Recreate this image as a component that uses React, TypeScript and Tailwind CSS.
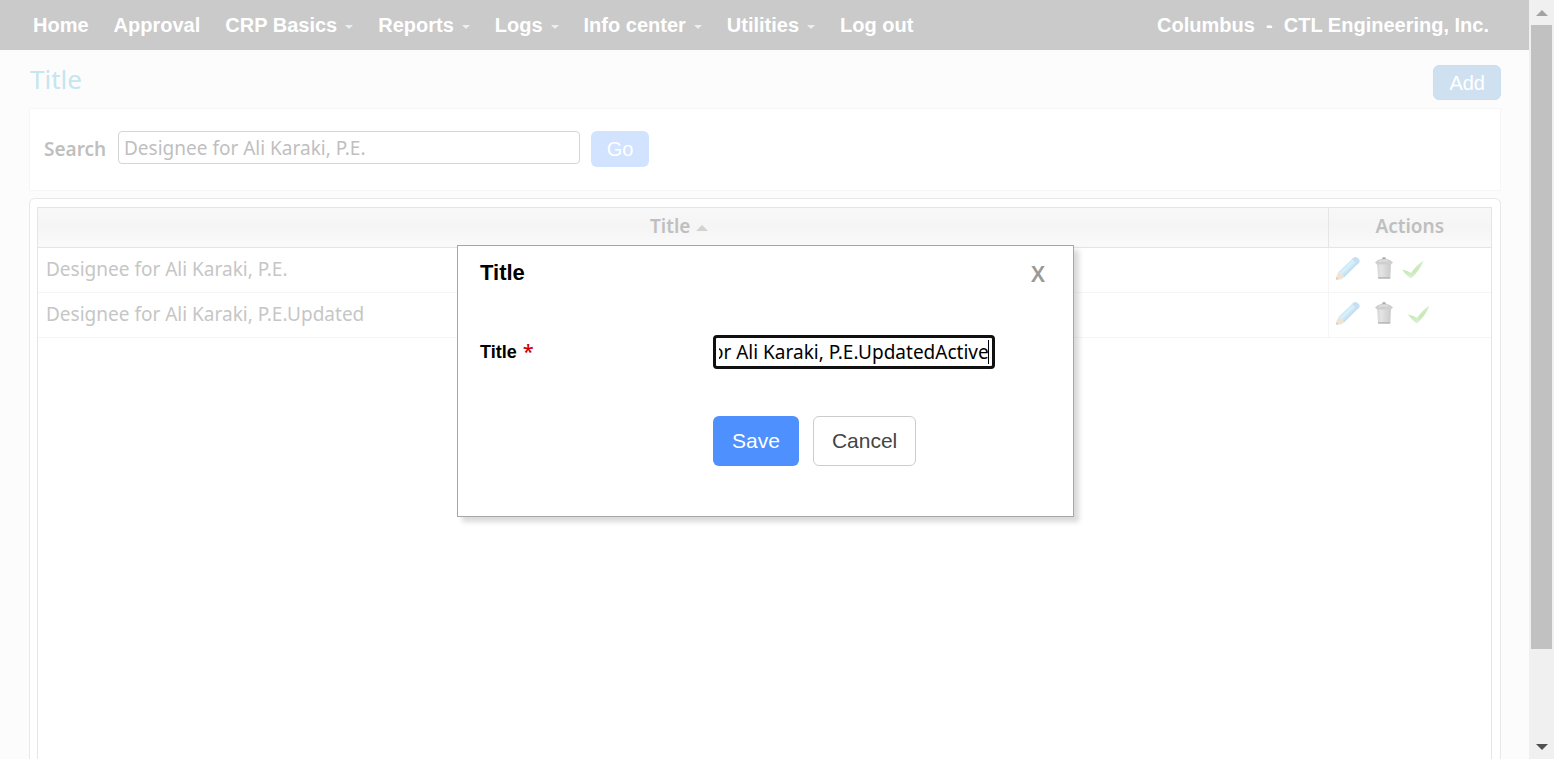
import { useEffect, useRef } from "react";

const navItems = [
  { label: "Home" },
  { label: "Approval" },
  { label: "CRP Basics", menu: true },
  { label: "Reports", menu: true },
  { label: "Logs", menu: true },
  { label: "Info center", menu: true },
  { label: "Utilities", menu: true },
  { label: "Log out" },
];

const rows = [
  { title: "Designee for Ali Karaki, P.E.", checkGap: "ml-2" },
  { title: "Designee for Ali Karaki, P.E.Updated", checkGap: "ml-3.5" },
];

function Pencil() {
  return (
    <svg width="24" height="24" viewBox="0 0 24 24" aria-hidden="true">
      <defs>
        <linearGradient id="pencilBody" gradientUnits="userSpaceOnUse" x1="8" y1="8" x2="15" y2="15">
          <stop offset="0.1" stopColor="#c3e3f4" />
          <stop offset="0.45" stopColor="#daf1fc" />
          <stop offset="0.95" stopColor="#bddcf0" />
        </linearGradient>
      </defs>
      <path d="M2.500 16 16.500 2.500l5.500 5L8 21.500Z" fill="url(#pencilBody)" />
      <path d="M16 3q2-2.500 4.500-1.800 3 1 3.300 3.800 0 1.500-2.300 3.500Z" fill="#c6e0f1" />
      <path d="M2.500 16 .2 21v2.500H5l3-2Q7.500 19 5.300 18.800 5 16.500 2.500 16Z" fill="#efe4d4" />
      <path d="M.2 21 2.500 23.500H.2Z" fill="#cfc8c0" />
    </svg>
  );
}

function Trash() {
  return (
    <svg width="20" height="24" viewBox="0 0 20 24" aria-hidden="true">
      <defs>
        <linearGradient id="canBody" x1="0" y1="0" x2="1" y2="0">
          <stop offset="0" stopColor="#d6d6d6" />
          <stop offset="0.3" stopColor="#e4e4e4" />
          <stop offset="1" stopColor="#cbcbcb" />
        </linearGradient>
      </defs>
      <path d="M3 7h14l-.6 14.500q0 1-1 1H5q-1 0-1-1Z" fill="url(#canBody)" />
      <path d="M3.800 21h12.600v.8q0 1-1 1H5q-1 0-1-1Z" fill="#bcbcbc" />
      <path d="M1 6.500Q3 3.500 7 3h6q4 .5 6 3.500L17 8.500H3Z" fill="#cfcfcf" />
      <path d="M5 5.500Q9 4 14 5" stroke="#e2e2e2" strokeWidth="1.200" fill="none" />
      <path d="M8 3Q8 1 10 1t2 2Z" fill="#b0b0b0" />
    </svg>
  );
}

function Check() {
  return (
    <svg width="22" height="24" viewBox="0 0 22 24" aria-hidden="true">
      <defs>
        <linearGradient id="checkFill" x1="0" y1="0" x2="0" y2="1">
          <stop offset="0" stopColor="#d5eec9" />
          <stop offset="0.6" stopColor="#c8e9b8" />
          <stop offset="1" stopColor="#dff2d6" />
        </linearGradient>
      </defs>
      <path d="M0 13.500Q5 14 9 17 14 9.500 21.500 4.500q-4 10.500-12.500 18Q4.500 20 0 13.500Z" fill="url(#checkFill)" />
    </svg>
  );
}

function EditDialog() {
  const field = useRef<HTMLInputElement>(null);
  useEffect(() => {
    const el = field.current;
    if (!el) return;
    el.focus();
    el.setSelectionRange(el.value.length, el.value.length);
    el.scrollLeft = el.scrollWidth;
  }, []);
  return (
    <div className="absolute inset-0 flex items-start justify-center pt-[245px] pl-0.5">
      <div
        role="dialog"
        aria-labelledby="dialog-title"
        className="w-[617px] border border-[#a6a6a6] bg-white px-[22px] pt-3 pb-[50px] shadow-[5px_5px_5px_rgba(0,0,0,0.15)]"
      >
        <div className="flex items-center justify-between pr-1.5">
          <h2 id="dialog-title" className="text-[22px] leading-[30px] font-bold text-black">Title</h2>
          <button type="button" aria-label="Close" className="font-['Noto_Sans',sans-serif] text-[22px] leading-[30px] font-semibold text-[#999]">X</button>
        </div>
        <form className="mt-[47px] grid grid-cols-[233px_1fr] items-center" onSubmit={(e) => e.preventDefault()}>
          <label htmlFor="title-field" className="flex items-center gap-1.5 text-[18px] leading-6 font-bold text-black">
            Title <span className="font-['Noto_Sans',sans-serif] text-[20px] leading-6 font-medium text-[#cc0000]">*</span>
          </label>
          <div className="relative w-[282px]">
            <input
              id="title-field"
              ref={field}
              defaultValue="Designee for Ali Karaki, P.E.UpdatedActive"
              className="block h-[34px] w-full rounded border-[3px] border-[#101010] px-[3px] font-['Noto_Sans',sans-serif] text-[19px] text-black caret-transparent outline-none"
            />
            <span className="absolute top-[5px] right-1.5 h-6 w-px bg-black" aria-hidden="true" />
          </div>
          <div className="col-start-2 mt-[47px] flex gap-3.5">
            <button type="submit" className="h-[50px] rounded-md bg-[#4d90fe] px-[19px] text-[21px] text-white">Save</button>
            <button type="button" className="h-[50px] rounded-md border border-[#ccc] bg-white px-[18px] text-[21px] text-[#444]">Cancel</button>
          </div>
        </form>
      </div>
    </div>
  );
}

export default function App() {
  return (
    <div className="flex h-screen overflow-hidden bg-[#fcfcfc] font-['Liberation_Sans',Arial,sans-serif]">
      <div className="relative flex min-w-0 flex-1 flex-col">
        <header className="flex h-[50px] shrink-0 items-center justify-between bg-[#cacaca] pr-10 pl-[33px] text-[20px] font-bold whitespace-nowrap text-white">
          <nav className="flex gap-[25px]">
            {navItems.map((item) => (
              <a key={item.label} href="#" className="flex items-center gap-2">
                {item.label}
                {item.menu && (
                  <svg width="8" height="4" viewBox="0 0 8 4" className="mt-1" aria-hidden="true">
                    <path d="M0 0h8L4 4Z" fill="#eeeeee" />
                  </svg>
                )}
              </a>
            ))}
          </nav>
          <p className="whitespace-pre">Columbus{"  -  "}CTL Engineering, Inc.</p>
        </header>
        <main className="flex min-h-0 flex-1 flex-col pr-7 pl-[29px] font-['Noto_Sans',sans-serif]">
          <div className="flex h-[58px] shrink-0 items-start justify-between pt-[15px] pl-px">
            <h1 className="text-[26px] leading-7 text-[#c5e5f1]">Title</h1>
            <button type="button" className="h-[35px] rounded-md border border-[#c8dff0] bg-[#cfe1f1] px-[15px] font-['Liberation_Sans',sans-serif] text-[20px] text-white">Add</button>
          </div>
          <form className="flex h-[83px] shrink-0 items-start border border-[#f6f6f6] bg-white px-3.5 pt-[22px]" onSubmit={(e) => e.preventDefault()}>
            <label htmlFor="search" className="w-[74px] text-[19px] leading-9 font-semibold text-[#bfbfbf]">Search</label>
            <input
              id="search"
              defaultValue="Designee for Ali Karaki, P.E."
              className="h-[33px] w-[462px] rounded border border-[#d5d5d5] bg-white px-[5px] text-[19px] text-[#bfbfbf] outline-none"
            />
            <button type="submit" className="ml-[11px] h-9 w-[58px] rounded-md bg-[#d2e3ff] font-['Liberation_Sans',sans-serif] text-[20px] text-white">Go</button>
          </form>
          <section className="mt-[7px] flex-1 rounded-t-md border border-b-0 border-[#e8e8e8] bg-white pt-2 pr-2 pl-[7px]">
            <div className="h-full border border-b-0 border-[#e5e5e5]">
              <table className="w-full table-fixed border-collapse">
                <colgroup>
                  <col />
                  <col className="w-[163px]" />
                </colgroup>
                <thead>
                  <tr className="h-[39px] border-b border-[#e5e5e5] bg-linear-to-b from-[#f8f8f8] via-[#f5f5f5] to-[#fafafa] text-[19px] leading-7 text-[#bfbfbf]">
                    <th className="border-r border-[#e5e5e5] p-0 pr-[7px] pb-0.5 font-semibold">
                      <button type="button" className="inline-flex items-center gap-1.5">
                        Title
                        <svg width="12" height="6" viewBox="0 0 12 6" className="mt-1" aria-hidden="true">
                          <path d="M0 6h12L6 0Z" fill="#d2d2d2" />
                        </svg>
                      </button>
                    </th>
                    <th className="p-0 pb-0.5 font-semibold">Actions</th>
                  </tr>
                </thead>
                <tbody>
                  {rows.map((row) => (
                    <tr key={row.title} className="h-[45px] border-b border-[#f5f5f5]">
                      <td className="border-r border-[#f5f5f5] p-0 pb-0.5 pl-2 text-[19px] leading-7 text-[#c6c6c6]">{row.title}</td>
                      <td className="p-0 pb-1 pl-[7px]">
                        <div className="flex items-center">
                          <button type="button" aria-label="Edit"><Pencil /></button>
                          <button type="button" aria-label="Delete" className="ml-3.5"><Trash /></button>
                          <button type="button" aria-label="Activate" className={row.checkGap}><Check /></button>
                        </div>
                      </td>
                    </tr>
                  ))}
                </tbody>
              </table>
            </div>
          </section>
        </main>
        <EditDialog />
      </div>
      <div className="flex w-[25px] shrink-0 flex-col items-center bg-[#f0f0f0]" aria-hidden="true">
        <div className="flex h-[25px] shrink-0 items-center">
          <svg width="12" height="6" viewBox="0 0 12 6"><path d="M0 6h12L6 0Z" fill="#a3a3a3" /></svg>
        </div>
        <div className="flex w-[21px] flex-1 flex-col">
          <div className="h-[88%] bg-[#c1c1c1]" />
        </div>
        <div className="flex h-[25px] shrink-0 items-center">
          <svg width="12" height="6" viewBox="0 0 12 6"><path d="M0 0h12L6 6Z" fill="#505050" /></svg>
        </div>
      </div>
    </div>
  );
}
